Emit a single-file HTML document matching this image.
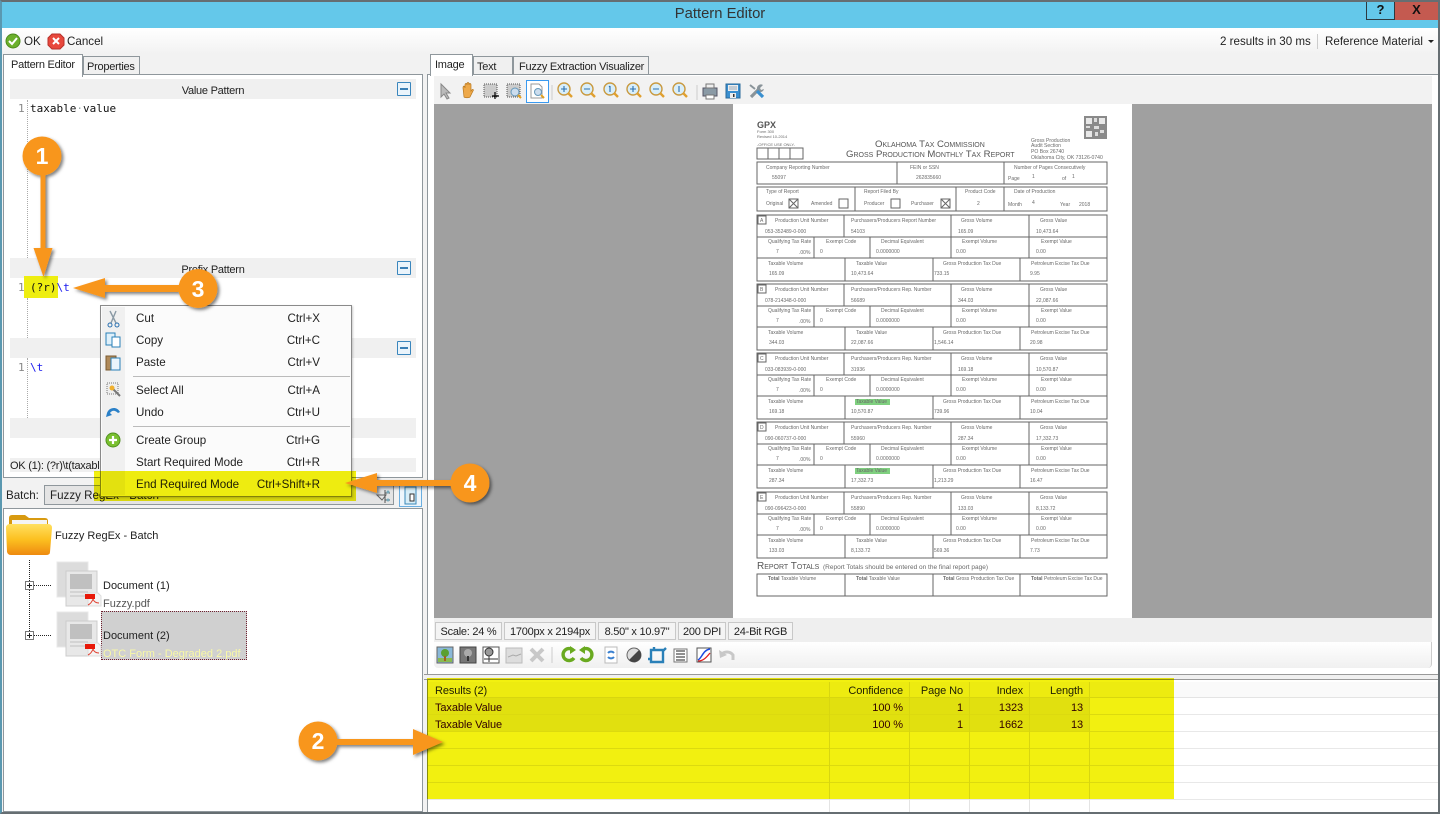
<!DOCTYPE html>
<html><head><meta charset="utf-8"><title>Pattern Editor</title>
<style>
html,body{margin:0;padding:0;background:#fff}
#p{position:relative;width:1440px;height:814px;overflow:hidden;background:#fff;font-family:"Liberation Sans",sans-serif;font-size:12px;color:#222}
#p div{position:absolute;box-sizing:border-box}
.t{white-space:nowrap;line-height:14px;font-size:11.6px;margin-top:1px}
.n{font-size:11px;letter-spacing:-.1px}
.m{font-size:11px;letter-spacing:-.25px}
.u{font-size:11px}
.r{text-align:right}
.c{font-family:"DejaVu Sans Mono","Liberation Mono",monospace;font-size:11px;line-height:14px;white-space:pre;margin-top:1px}
.h{background:#f0f0f0;left:10px;width:406px;height:20px}
.b{left:397px;width:14px;height:14px;border:1px solid #3a86bd;background:#eaf4fb;border-radius:1px}
.b:after{content:"";position:absolute;left:2px;top:5px;width:8px;height:2px;background:#3a7fb5}
.tab{background:#f0f0f0;border:1px solid #8f979c}
.s{top:622px;height:18px;border:1px solid #c8c8c8;background:#f4f4f4;font-size:11px;letter-spacing:-.25px;line-height:18px;text-align:center;white-space:nowrap}
svg{position:absolute;left:0;top:0}
.f text{font-family:"Liberation Sans",sans-serif;font-size:5px;fill:#6a6a6a}
.f path{fill:none;stroke:#666;stroke-width:1}
</style></head><body><div id="p">

<!-- window -->
<div style="left:2px;top:2px;width:1436px;height:26px;background:#64c8ea"></div>
<div class="t" style="left:520px;width:400px;top:5px;text-align:center;font-size:14.8px;line-height:16px;color:#333">Pattern Editor</div>
<div style="left:1366px;top:2px;width:29px;height:18px;border:1px solid #2d3a40;border-top:0;text-align:center;font-weight:bold;font-size:13px;line-height:15px;color:#111">?</div>
<div style="left:1395px;top:2px;width:43px;height:18px;background:#c45a50;text-align:center;font-weight:bold;font-size:13px;line-height:15px;color:#111">X</div>

<!-- top toolbar -->
<div style="left:2px;top:28px;width:1436px;height:26px;background:linear-gradient(#fff,#f2f2f2)"></div>
<div class="t" style="left:24px;top:34px">OK</div>
<div class="t" style="left:67px;top:34px">Cancel</div>
<div class="t" style="left:1220px;top:34px">2 results in 30 ms</div>
<div style="left:1317px;top:34px;width:1px;height:15px;background:#ccc"></div>
<div class="t" style="left:1325px;top:34px">Reference Material</div>
<div style="left:1428px;top:40px;width:0;height:0;border:3px solid transparent;border-top:3px solid #222;border-bottom:0"></div>

<div style="left:2px;top:54px;width:1436px;height:758px;background:#f2f2f2"></div>

<!-- left panel -->
<div style="left:3px;top:74px;width:420px;height:404px;background:#fff;border:1px solid #8f979c"></div>
<div class="tab" style="left:83px;top:56px;width:57px;height:19px"></div>
<div class="t m" style="left:87px;top:59px">Properties</div>
<div style="left:3px;top:54px;width:80px;height:23px;background:#fff;border:1px solid #8f979c;border-bottom:0"></div>
<div class="t m" style="left:11px;top:57px">Pattern Editor</div>

<div class="h" style="top:79px"></div>
<div class="t m" style="left:10px;width:406px;top:83px;text-align:center">Value Pattern</div>
<div class="b" style="top:82px"></div>
<div class="c" style="left:18px;top:101px;color:#888">1</div>
<div class="c" style="left:30px;top:101px;color:#111">taxable<span style="color:#9aa">·</span>value</div>
<div style="left:27px;top:100px;height:158px;border-left:1px dotted #aaa"></div>

<div class="h" style="top:258px"></div>
<div class="t m" style="left:10px;width:406px;top:262px;text-align:center">Prefix Pattern</div>
<div class="b" style="top:261px"></div>
<div style="left:24px;top:276px;width:34px;height:22px;background:#eeee10"></div>
<div class="c" style="left:18px;top:280px;color:#888">1</div>
<div class="c" style="left:30px;top:280px;color:#111">(?r)<span style="color:#1a1aee">\t</span></div>
<div style="left:27px;top:298px;height:40px;border-left:1px dotted #aaa"></div>

<div class="h" style="top:338px"></div>
<div class="b" style="top:341px"></div>
<div class="c" style="left:18px;top:360px;color:#888">1</div>
<div class="c" style="left:30px;top:360px;color:#1a1aee">\t</div>
<div style="left:27px;top:358px;height:60px;border-left:1px dotted #aaa"></div>
<div class="h" style="top:418px"></div>
<div class="h" style="top:458px;height:14px"></div>
<div class="t m" style="left:10px;top:458px">OK (1): (?r)\t(taxable</div>

<!-- batch row -->
<div class="t" style="left:6px;top:488px">Batch:</div>
<div style="left:44px;top:485px;width:350px;height:20px;background:#e4e4e4;border:1px solid #8f979c"></div>
<div class="t" style="left:50px;top:488px">Fuzzy RegEx - Batch</div>
<div style="left:399px;top:485px;width:23px;height:22px;background:#eef6fc;border:1px solid #6aaee0"></div>

<!-- tree -->
<div style="left:3px;top:508px;width:420px;height:304px;background:#fff;border:1px solid #8f979c"></div>
<div class="t u" style="left:55px;top:528px">Fuzzy RegEx - Batch</div>
<div style="left:101px;top:611px;width:146px;height:49px;background:#d0d0d0;border:1px dotted #702030"></div>
<div class="t u" style="left:103px;top:578px">Document (1)</div>
<div class="t u" style="left:103px;top:596px;color:#555">Fuzzy.pdf</div>
<div class="t u" style="left:103px;top:628px">Document (2)</div>
<div class="t u" style="left:103px;top:646px;color:#f8f8a8">OTC Form - Degraded 2.pdf</div>

<!-- right panel -->
<div style="left:427px;top:74px;width:1011px;height:601px;background:#fff;border-top:1px solid #8f979c;border-left:1px solid #8f979c"></div>
<div class="tab" style="left:473px;top:56px;width:40px;height:19px"></div>
<div class="t m" style="left:477px;top:59px">Text</div>
<div class="tab" style="left:513px;top:56px;width:136px;height:19px"></div>
<div class="t m" style="left:519px;top:59px">Fuzzy Extraction Visualizer</div>
<div style="left:430px;top:54px;width:43px;height:22px;background:#fff;border:1px solid #8f979c;border-bottom:0"></div>
<div class="t m" style="left:435px;top:57px">Image</div>
<div style="left:434px;top:76px;width:998px;height:28px;background:#f2f2f2"></div>
<div style="left:526px;top:80px;width:23px;height:23px;background:#fff;border:1px solid #3a9af0"></div>
<div style="left:434px;top:104px;width:299px;height:514px;background:#a0a0a0"></div>
<div style="left:1132px;top:104px;width:300px;height:514px;background:#a0a0a0"></div>
<div style="left:434px;top:618px;width:998px;height:25px;background:#efefef"></div>
<div style="left:434px;top:642px;width:998px;height:26px;background:linear-gradient(#fff,#f0f0f0);border-radius:0 0 4px 4px;border-right:1px solid #ccc"></div>
<div class="s" style="left:435px;width:67px">Scale: 24 %</div>
<div class="s" style="left:504px;width:92px">1700px x 2194px</div>
<div class="s" style="left:598px;width:78px">8.50" x 10.97"</div>
<div class="s" style="left:678px;width:48px">200 DPI</div>
<div class="s" style="left:728px;width:65px">24-Bit RGB</div>

<!-- form -->
<svg class="f" width="1440" height="814" style="filter:blur(.35px)">
<text x="757" y="128" style="font-size:9px;font-weight:bold;fill:#555">GPX</text>
<text x="757" y="133" style="font-size:4px">Form 300</text>
<text x="757" y="138" style="font-size:4px">Revised 10-2014</text>
<text x="757" y="146" style="font-size:4px">-OFFICE USE ONLY-</text>
<path d="M757 148h46v11h-46zM768 148v11M779 148v11M790 148v11"/>
<text x="875" y="147" style="font-size:9.6px;font-variant:small-caps;fill:#555">Oklahoma Tax Commission</text>
<text x="846" y="157" style="font-size:9.6px;font-variant:small-caps;fill:#555">Gross Production Monthly Tax Report</text>
<text x="1031" y="142" style="font-size:5.100px">Gross Production</text>
<text x="1031" y="147" style="font-size:5.100px">Audit Section</text>
<text x="1031" y="153" style="font-size:5.100px">PO Box 26740</text>
<text x="1031" y="159" style="font-size:5.100px">Oklahoma City, OK 73126-0740</text>
<rect x="1084" y="116" width="23" height="23" fill="#8a8a8a"/>
<rect x="1086" y="118" width="6" height="6" fill="#e8e8e8"/><rect x="1099" y="118" width="6" height="6" fill="#e8e8e8"/><rect x="1086" y="131" width="6" height="6" fill="#e8e8e8"/><rect x="1094" y="118" width="3" height="4" fill="#ddd"/><rect x="1094" y="126" width="5" height="3" fill="#ddd"/><rect x="1086" y="126" width="4" height="2" fill="#ddd"/><rect x="1095" y="132" width="3" height="4" fill="#ddd"/><rect x="1100" y="130" width="4" height="3" fill="#ddd"/>
<path d="M757 162h350v22h-350zM897 162v22M1004 162v22M757 187h350v24h-350zM855 187v24M956 187v24M1004 187v24"/>
<text x="766" y="169">Company Reporting Number</text><text x="772" y="179">55097</text>
<text x="910" y="169">FEIN or SSN</text><text x="916" y="179">262835660</text>
<text x="1014" y="169">Number of Pages Consecutively</text><text x="1008" y="180">Page</text><text x="1032" y="178">1</text><text x="1062" y="180">of</text><text x="1072" y="178">1</text>
<text x="766" y="193">Type of Report</text><text x="766" y="205">Original</text><rect x="789" y="199" width="9" height="9" style="fill:none;stroke:#666"/><text x="811" y="205">Amended</text><rect x="839" y="199" width="9" height="9" style="fill:none;stroke:#666"/>
<text x="864" y="193">Report Filed By</text><text x="864" y="205">Producer</text><rect x="891" y="199" width="9" height="9" style="fill:none;stroke:#666"/><text x="911" y="205">Purchaser</text><rect x="941" y="199" width="9" height="9" style="fill:none;stroke:#666"/>
<path d="M789 199l9 9M798 199l-9 9M941 199l9 9M950 199l-9 9"/>
<text x="965" y="193">Product Code</text><text x="977" y="205">2</text>
<text x="1014" y="193">Date of Production</text><text x="1008" y="206">Month</text><text x="1032" y="204">4</text><text x="1060" y="206">Year</text><text x="1079" y="206">2018</text>

<rect x="855" y="399" width="35" height="6" fill="#7fd07f"/><rect x="855" y="468" width="35" height="6" fill="#7fd07f"/>

<g>
<path d="M757 215h350v66h-350zM757 237h350M757 258h350M844 215v22M951 215v22M1029 215v22M814 237v21M870 237v21M951 237v21M1029 237v21M845 258v23M933 258v23M1020 258v23M758 216h8v8h-8z"/>
<text x="760" y="222">A</text><text x="775" y="222">Production Unit Number</text><text x="851" y="222">Purchasers/Producers Report Number</text><text x="961" y="222">Gross Volume</text><text x="1040" y="222">Gross Value</text>
<text x="765" y="233">053-352489-0-000</text><text x="851" y="233">54103</text><text x="958" y="233">165.09</text><text x="1036" y="233">10,473.64</text>
<text x="768" y="243">Qualifying Tax Rate</text><text x="826" y="243">Exempt Code</text><text x="881" y="243">Decimal Equivalent</text><text x="962" y="243">Exempt Volume</text><text x="1041" y="243">Exempt Value</text>
<text x="776" y="253">7</text><text x="799" y="254">.00%</text><text x="820" y="253">0</text><text x="876" y="253">0.0000000</text><text x="956" y="253">0.00</text><text x="1036" y="253">0.00</text>
<text x="768" y="265">Taxable Volume</text><text x="856" y="265">Taxable Value</text><text x="943" y="265">Gross Production Tax Due</text><text x="1031" y="265">Petroleum Excise Tax Due</text>
<text x="769" y="275">165.09</text><text x="851" y="275">10,473.64</text><text x="934" y="275">733.15</text><text x="1030" y="275">9.95</text>
</g>
<g>
<path d="M757 284h350v66h-350zM757 306h350M757 327h350M844 284v22M951 284v22M1029 284v22M814 306v21M870 306v21M951 306v21M1029 306v21M845 327v23M933 327v23M1020 327v23M758 285h8v8h-8z"/>
<text x="760" y="291">B</text><text x="775" y="291">Production Unit Number</text><text x="851" y="291">Purchasers/Producers Rep. Number</text><text x="961" y="291">Gross Volume</text><text x="1040" y="291">Gross Value</text>
<text x="765" y="302">078-214348-0-000</text><text x="851" y="302">56689</text><text x="958" y="302">344.03</text><text x="1036" y="302">22,087.66</text>
<text x="768" y="312">Qualifying Tax Rate</text><text x="826" y="312">Exempt Code</text><text x="881" y="312">Decimal Equivalent</text><text x="962" y="312">Exempt Volume</text><text x="1041" y="312">Exempt Value</text>
<text x="776" y="322">7</text><text x="799" y="323">.00%</text><text x="820" y="322">0</text><text x="876" y="322">0.0000000</text><text x="956" y="322">0.00</text><text x="1036" y="322">0.00</text>
<text x="768" y="334">Taxable Volume</text><text x="856" y="334">Taxable Value</text><text x="943" y="334">Gross Production Tax Due</text><text x="1031" y="334">Petroleum Excise Tax Due</text>
<text x="769" y="344">344.03</text><text x="851" y="344">22,087.66</text><text x="934" y="344">1,546.14</text><text x="1030" y="344">20.98</text>
</g>
<g>
<path d="M757 353h350v66h-350zM757 375h350M757 396h350M844 353v22M951 353v22M1029 353v22M814 375v21M870 375v21M951 375v21M1029 375v21M845 396v23M933 396v23M1020 396v23M758 354h8v8h-8z"/>
<text x="760" y="360">C</text><text x="775" y="360">Production Unit Number</text><text x="851" y="360">Purchasers/Producers Rep. Number</text><text x="961" y="360">Gross Volume</text><text x="1040" y="360">Gross Value</text>
<text x="765" y="371">033-083939-0-000</text><text x="851" y="371">31936</text><text x="958" y="371">169.18</text><text x="1036" y="371">10,570.87</text>
<text x="768" y="381">Qualifying Tax Rate</text><text x="826" y="381">Exempt Code</text><text x="881" y="381">Decimal Equivalent</text><text x="962" y="381">Exempt Volume</text><text x="1041" y="381">Exempt Value</text>
<text x="776" y="391">7</text><text x="799" y="392">.00%</text><text x="820" y="391">0</text><text x="876" y="391">0.0000000</text><text x="956" y="391">0.00</text><text x="1036" y="391">0.00</text>
<text x="768" y="403">Taxable Volume</text><text x="856" y="403">Taxable Value</text><text x="943" y="403">Gross Production Tax Due</text><text x="1031" y="403">Petroleum Excise Tax Due</text>
<text x="769" y="413">169.18</text><text x="851" y="413">10,570.87</text><text x="934" y="413">739.96</text><text x="1030" y="413">10.04</text>
</g>
<g>
<path d="M757 422h350v66h-350zM757 444h350M757 465h350M844 422v22M951 422v22M1029 422v22M814 444v21M870 444v21M951 444v21M1029 444v21M845 465v23M933 465v23M1020 465v23M758 423h8v8h-8z"/>
<text x="760" y="429">D</text><text x="775" y="429">Production Unit Number</text><text x="851" y="429">Purchasers/Producers Rep. Number</text><text x="961" y="429">Gross Volume</text><text x="1040" y="429">Gross Value</text>
<text x="765" y="440">090-060737-0-000</text><text x="851" y="440">55960</text><text x="958" y="440">287.34</text><text x="1036" y="440">17,332.73</text>
<text x="768" y="450">Qualifying Tax Rate</text><text x="826" y="450">Exempt Code</text><text x="881" y="450">Decimal Equivalent</text><text x="962" y="450">Exempt Volume</text><text x="1041" y="450">Exempt Value</text>
<text x="776" y="460">7</text><text x="799" y="461">.00%</text><text x="820" y="460">0</text><text x="876" y="460">0.0000000</text><text x="956" y="460">0.00</text><text x="1036" y="460">0.00</text>
<text x="768" y="472">Taxable Volume</text><text x="856" y="472">Taxable Value</text><text x="943" y="472">Gross Production Tax Due</text><text x="1031" y="472">Petroleum Excise Tax Due</text>
<text x="769" y="482">287.34</text><text x="851" y="482">17,332.73</text><text x="934" y="482">1,213.29</text><text x="1030" y="482">16.47</text>
</g>
<g>
<path d="M757 492h350v66h-350zM757 514h350M757 535h350M844 492v22M951 492v22M1029 492v22M814 514v21M870 514v21M951 514v21M1029 514v21M845 535v23M933 535v23M1020 535v23M758 493h8v8h-8z"/>
<text x="760" y="499">E</text><text x="775" y="499">Production Unit Number</text><text x="851" y="499">Purchasers/Producers Rep. Number</text><text x="961" y="499">Gross Volume</text><text x="1040" y="499">Gross Value</text>
<text x="765" y="510">090-096423-0-000</text><text x="851" y="510">55890</text><text x="958" y="510">133.03</text><text x="1036" y="510">8,133.72</text>
<text x="768" y="520">Qualifying Tax Rate</text><text x="826" y="520">Exempt Code</text><text x="881" y="520">Decimal Equivalent</text><text x="962" y="520">Exempt Volume</text><text x="1041" y="520">Exempt Value</text>
<text x="776" y="530">7</text><text x="799" y="531">.00%</text><text x="820" y="530">0</text><text x="876" y="530">0.0000000</text><text x="956" y="530">0.00</text><text x="1036" y="530">0.00</text>
<text x="768" y="542">Taxable Volume</text><text x="856" y="542">Taxable Value</text><text x="943" y="542">Gross Production Tax Due</text><text x="1031" y="542">Petroleum Excise Tax Due</text>
<text x="769" y="552">133.03</text><text x="851" y="552">8,133.72</text><text x="934" y="552">569.36</text><text x="1030" y="552">7.73</text>
</g>
<text x="757" y="569" style="font-size:10px;font-variant:small-caps;fill:#555">Report Totals</text><text x="823" y="569" style="font-size:6.500px">(Report Totals should be entered on the final report page)</text>
<path d="M757 574h350v22h-350zM845 574v22M933 574v22M1020 574v22"/>
<text x="768" y="580"><tspan font-weight="bold">Total</tspan> Taxable Volume</text><text x="856" y="580"><tspan font-weight="bold">Total</tspan> Taxable Value</text><text x="943" y="580"><tspan font-weight="bold">Total</tspan> Gross Production Tax Due</text><text x="1031" y="580"><tspan font-weight="bold">Total</tspan> Petroleum Excise Tax Due</text>
</svg>

<!-- results grid -->
<div style="left:424px;top:674px;width:1014px;height:6px;background:#f0f0f0;border-top:1px solid #999;border-bottom:1px solid #999"></div>
<div style="left:427px;top:680px;width:1011px;height:132px;background:#fff;border-left:1px solid #8f979c"></div>
<div style="left:428px;top:682px;width:1010px;height:16px;background:#fafafa;border-bottom:1px solid #e4e4e4"></div>
<div style="left:428px;top:698px;width:662px;height:34px;background:#eee"></div>
<div style="left:428px;top:714px;width:1010px;height:1px;background:#e8e8e8"></div>
<div style="left:428px;top:731px;width:1010px;height:1px;background:#e8e8e8"></div>
<div style="left:428px;top:748px;width:1010px;height:1px;background:#e8e8e8"></div>
<div style="left:428px;top:765px;width:1010px;height:1px;background:#e8e8e8"></div>
<div style="left:428px;top:782px;width:1010px;height:1px;background:#e8e8e8"></div>
<div style="left:428px;top:799px;width:1010px;height:1px;background:#e8e8e8"></div>
<div style="left:829px;top:682px;width:1px;height:130px;background:#e4e4e4"></div>
<div style="left:909px;top:682px;width:1px;height:130px;background:#e4e4e4"></div>
<div style="left:969px;top:682px;width:1px;height:130px;background:#e4e4e4"></div>
<div style="left:1029px;top:682px;width:1px;height:130px;background:#e4e4e4"></div>
<div style="left:1089px;top:682px;width:1px;height:130px;background:#e4e4e4"></div>
<div class="t n" style="left:435px;top:683px">Results (2)</div>
<div class="t r n" style="left:829px;width:74px;top:683px">Confidence</div>
<div class="t r n" style="left:909px;width:54px;top:683px">Page No</div>
<div class="t r n" style="left:969px;width:54px;top:683px">Index</div>
<div class="t r n" style="left:1029px;width:54px;top:683px">Length</div>
<div class="t n" style="left:435px;top:700px;color:#300">Taxable Value</div>
<div class="t r n" style="left:829px;width:74px;top:700px;color:#300">100 %</div>
<div class="t r n" style="left:909px;width:54px;top:700px;color:#300">1</div>
<div class="t r n" style="left:969px;width:54px;top:700px;color:#300">1323</div>
<div class="t r n" style="left:1029px;width:54px;top:700px;color:#300">13</div>
<div class="t n" style="left:435px;top:717px;color:#300">Taxable Value</div>
<div class="t r n" style="left:829px;width:74px;top:717px;color:#300">100 %</div>
<div class="t r n" style="left:909px;width:54px;top:717px;color:#300">1</div>
<div class="t r n" style="left:969px;width:54px;top:717px;color:#300">1662</div>
<div class="t r n" style="left:1029px;width:54px;top:717px;color:#300">13</div>
<div style="left:427px;top:678px;width:747px;height:121px;background:#f2f010;mix-blend-mode:multiply"></div>

<!-- icons -->
<svg width="1440" height="814">
<defs><linearGradient id="fg" x1="0" y1="0" x2="0" y2="1"><stop offset="0" stop-color="#ffe060"/><stop offset=".5" stop-color="#fcc020"/><stop offset="1" stop-color="#ee8a10"/></linearGradient></defs>
<!-- ok cancel -->
<circle cx="13" cy="41" r="7" fill="#6cb02c" stroke="#4d8a1c"/><path d="M9 41l3 3 5-6" stroke="#fff" stroke-width="2" fill="none"/>
<path d="M52 34h8l4 4v7l-4 4h-8l-4-4v-7z" fill="#e8483c" stroke="#b8302a"/><path d="M53 38l6 6M59 38l-6 6" stroke="#fff" stroke-width="2"/>
<!-- image toolbar -->
<path d="M441 84v13l3-3 3 5 2-1-3-5h4z" fill="#bbb" stroke="#888"/>
<path d="M463 88c0-3 2-2 2 0v-3c0-2 2-2 2 0v-1c0-2 2-2 2 0v1c0-2 2-2 2 0v6c2-3 3-1 2 0l-3 6c-1 1-5 1-6 0z" fill="#eea94a" stroke="#b87820" stroke-width=".7"/>
<rect x="484" y="84" width="13" height="13" fill="#ccc" stroke="#555" stroke-dasharray="1 1"/><path d="M495 92v7M492 96h7" stroke="#000" stroke-width="1.2"/>
<rect x="507" y="84" width="13" height="13" fill="#ccc" stroke="#555" stroke-dasharray="1 1"/><circle cx="515" cy="92" r="4" fill="#cde" stroke="#6699bb"/><path d="M518 95l3 3" stroke="#e0a020" stroke-width="2"/>
<path d="M531 84h8l3 3v11h-11z" fill="#fff" stroke="#999"/><circle cx="538" cy="92" r="3.5" fill="#cde" stroke="#6699bb"/><path d="M541 95l3 3" stroke="#e0a020" stroke-width="2"/>
<path d="M552 85v15" stroke="#ccc"/>
<g fill="#d8eefa" stroke="#c99a40" stroke-width="1.4">
<circle cx="564" cy="89" r="6"/><circle cx="587" cy="89" r="6"/><circle cx="610" cy="89" r="6"/><circle cx="633" cy="89" r="6"/><circle cx="656" cy="89" r="6"/><circle cx="679" cy="89" r="6"/>
</g>
<g stroke="#e0a030" stroke-width="2.4"><path d="M568 93l4 4M591 93l4 4M614 93l4 4M637 93l4 4M660 93l4 4M683 93l4 4"/></g>
<g stroke="#2a70b0" stroke-width="1.1" fill="none"><path d="M561 89h6M564 86v6M584 89h6M610 86v6M609 87l1-1M630 89h6M633 86v6M653 89h6M679 86v6"/></g>
<path d="M697 85v15" stroke="#ccc"/>
<rect x="703" y="88" width="14" height="8" fill="#8a9aa5" stroke="#556"/><rect x="706" y="84" width="8" height="4" fill="#eee" stroke="#777"/><rect x="706" y="95" width="8" height="4" fill="#fff" stroke="#777"/>
<path d="M726 84h14v14h-14z" fill="#3a8fd0" stroke="#2a6a9a"/><rect x="728" y="85" width="10" height="6" fill="#eee"/><path d="M729 87h8M729 89h8" stroke="#9ab"/><rect x="730" y="93" width="6" height="5" fill="#eee"/><rect x="733" y="94" width="1.500" height="3" fill="#333"/>
<path d="M751 97l8-8" stroke="#8a949a" stroke-width="3.200"/><path d="M757 89a4 4 0 0 1 6-4l-3 3 1 2 3-1a4 4 0 0 1-5 3z" fill="#8a949a"/>
<path d="M763 97l-6-6" stroke="#3a90d0" stroke-width="3.200"/><path d="M755 89l-5-4" stroke="#8a949a" stroke-width="2"/>
<!-- bottom toolbar -->
<rect x="437" y="647" width="16" height="16" fill="#8ab8d8" stroke="#666"/><circle cx="445" cy="653" r="4" fill="#5aa030"/><rect x="438" y="658" width="14" height="4" fill="#8aba50"/><rect x="444" y="656" width="2" height="5" fill="#a06020"/>
<rect x="460" y="647" width="16" height="16" fill="#777" stroke="#444"/><circle cx="468" cy="653" r="4" fill="#aaa"/><rect x="467" y="656" width="2" height="5" fill="#333"/>
<rect x="483" y="647" width="16" height="16" fill="#fff" stroke="#555"/><circle cx="489" cy="652" r="4" fill="#999" stroke="#333"/><path d="M489 656v6M484 659h14" stroke="#333"/>
<rect x="506" y="648" width="16" height="15" fill="#ddd" stroke="#bbb"/><path d="M508 657l5-2 3 1 5-2" stroke="#aaa" fill="none"/>
<path d="M531 649l12 12M543 649l-12 12" stroke="#c8c8c8" stroke-width="4"/>
<path d="M552 647v16" stroke="#ccc"/>
<path d="M573 650a6 6 0 1 0 1 8" fill="none" stroke="#6aaa20" stroke-width="3.4"/><path d="M570 646l6 4-6 4z" fill="#6aaa20"/>
<path d="M582 650a6 6 0 1 1-1 8" fill="none" stroke="#6aaa20" stroke-width="3.4"/><path d="M585 646l-6 4 6 4z" fill="#6aaa20"/>
<rect x="605" y="647" width="12" height="16" fill="#fff" stroke="#bbb"/><path d="M608 653a4 4 0 0 1 6 0M614 657a4 4 0 0 1-6 0" stroke="#3a80d0" stroke-width="2" fill="none"/>
<circle cx="634" cy="655" r="7" fill="#ddd" stroke="#666"/><path d="M639 650a7 7 0 0 1-10 10z" fill="#444"/>
<path d="M651 650h12v12h-12zM654 647v3M651 659h-3M663 651l3-3" fill="none" stroke="#2a80b8" stroke-width="2.4"/>
<rect x="674" y="649" width="13" height="13" fill="#fff" stroke="#777"/><path d="M676 651h9M676 654h9M676 657h9M676 660h9" stroke="#222"/>
<rect x="697" y="648" width="14" height="14" fill="#fff" stroke="#555"/><path d="M698 660c4-2 5-10 12-11" stroke="#1a4ae0" stroke-width="1.5" fill="none"/><path d="M698 661c5 0 8-3 12-8" stroke="#e02020" stroke-width="1.3" fill="none"/>
<path d="M721 655c3-4 9-4 12 0v5" fill="none" stroke="#c8c8c8" stroke-width="3"/><path d="M719 650l1 8 7-3z" fill="#c8c8c8"/>
<!-- batch -->
<path d="M377 495h9l-4 5z" fill="none" stroke="#666"/><path d="M385 490v13M385 493h5M385 500h5" stroke="#555"/><circle cx="388" cy="492" r="1.5" fill="#7ab"/><circle cx="388" cy="500" r="1.5" fill="#7ab"/>
<rect x="405" y="487" width="11" height="17" fill="#d8eef8" stroke="#3a88b8"/><rect x="410" y="494" width="4" height="7" fill="#fff" stroke="#333"/>
<!-- folder -->
<path d="M9 518q0-3 3-3h13l4 3h16q3 0 3 3v6H9z" fill="#d89a10"/>
<rect x="12" y="520" width="35" height="5" fill="#f4f4f4"/>
<path d="M6 528q0-4 4-4l38 0q4 0 4 4l-2 24q0 3-4 3H11q-3 0-4-3z" fill="url(#fg)"/>
<!-- tree lines -->
<path d="M29.5 560v75M34 585.500h18M34 635.500h18" stroke="#222" stroke-dasharray="1 1" fill="none"/>
<rect x="25.5" y="581.500" width="8" height="8" fill="#fff" stroke="#777"/><path d="M27 585.500h5M29.5 583v5" stroke="#222"/>
<rect x="25.500" y="631.500" width="8" height="8" fill="#fff" stroke="#777"/><path d="M27 635.500h5M29.5 633v5" stroke="#222"/>
<!-- doc icons -->
<rect x="57" y="562" width="31" height="35" fill="#dcdcdc" stroke="#e8e8e8"/><rect x="66" y="571" width="31" height="35" fill="#e8e8e8" stroke="#ccc"/><path d="M70 574h22v15h-22z" fill="#c0c0c0"/><path d="M70 592h18M70 596h15" stroke="#c0c0c0"/>
<path d="M88 593h10l3 3v10H88z" fill="#f4f4f4" stroke="#ddd"/><rect x="85" y="594" width="10" height="5" fill="#e81808"/><path d="M93 599c-1 3-3 5-5 6M93 599c1 3 3 4 6 4" stroke="#e04030" fill="none"/>
<rect x="57" y="612" width="31" height="35" fill="#dcdcdc" stroke="#e8e8e8"/><rect x="66" y="621" width="31" height="35" fill="#e8e8e8" stroke="#ccc"/><path d="M70 624h22v15h-22z" fill="#c0c0c0"/><path d="M70 642h18M70 646h15" stroke="#c0c0c0"/>
<path d="M88 643h10l3 3v10H88z" fill="#f4f4f4" stroke="#ddd"/><rect x="85" y="644" width="10" height="5" fill="#e81808"/><path d="M93 649c-1 3-3 5-5 6M93 649c1 3 3 4 6 4" stroke="#e04030" fill="none"/>
</svg>

<!-- context menu -->
<div style="left:100px;top:305px;width:252px;height:192px;background:#fbfbfb;border:1px solid #8a8a8a;box-shadow:1px 1px 2px rgba(0,0,0,.2)"></div>
<div style="left:102px;top:307px;width:23px;height:188px;background:#f0f0f0"></div>
<div style="left:133px;top:376px;width:217px;height:1px;background:#bbb"></div>
<div style="left:133px;top:426px;width:217px;height:1px;background:#bbb"></div>
<div class="t" style="left:136px;top:311px">Cut</div><div class="t r" style="left:240px;width:80px;top:311px">Ctrl+X</div>
<div class="t" style="left:136px;top:333px">Copy</div><div class="t r" style="left:240px;width:80px;top:333px">Ctrl+C</div>
<div class="t" style="left:136px;top:355px">Paste</div><div class="t r" style="left:240px;width:80px;top:355px">Ctrl+V</div>
<div class="t" style="left:136px;top:383px">Select All</div><div class="t r" style="left:240px;width:80px;top:383px">Ctrl+A</div>
<div class="t" style="left:136px;top:405px">Undo</div><div class="t r" style="left:240px;width:80px;top:405px">Ctrl+U</div>
<div class="t" style="left:136px;top:433px">Create Group</div><div class="t r" style="left:240px;width:80px;top:433px">Ctrl+G</div>
<div class="t" style="left:136px;top:455px">Start Required Mode</div><div class="t r" style="left:240px;width:80px;top:455px">Ctrl+R</div>
<div class="t" style="left:136px;top:477px">End Required Mode</div><div class="t r" style="left:230px;width:90px;top:477px">Ctrl+Shift+R</div>
<svg width="1440" height="814">
<path d="M110 311l6 12M116 311l-5 12" stroke="#8a9aa5" stroke-width="1.4"/><circle cx="110" cy="325" r="2" fill="none" stroke="#2a70b0"/><circle cx="117" cy="325" r="2" fill="none" stroke="#2a70b0"/>
<path d="M106 333h9v12h-9z" fill="#dff0fa" stroke="#2a80b8"/><path d="M112 337h8v10h-8z" fill="#fff" stroke="#2a80b8"/>
<rect x="106" y="356" width="10" height="14" fill="#b08a5a" stroke="#7a5a30"/><path d="M111 358h9v12h-9z" fill="#eaf5fb" stroke="#2a80b8"/>
<rect x="107" y="383" width="11" height="11" fill="#eee" stroke="#777" stroke-dasharray="1 1"/><path d="M113 389l7 7" stroke="#777" stroke-width="2"/><circle cx="112" cy="388" r="2.500" fill="#f0b030"/>
<path d="M107 413c2-6 10-7 13-1l-2 1c-3-3-6-3-8 0l2 2-6 2z" fill="#2a80c8"/>
<circle cx="113" cy="440" r="7" fill="#7ac030" stroke="#509020"/><path d="M109 440h8M113 436v8" stroke="#fff" stroke-width="2.200"/>
</svg>
<div style="left:94px;top:471px;width:262px;height:30px;background:#f2f010;mix-blend-mode:multiply"></div>

<!-- window border -->
<div style="left:0;top:0;width:1440px;height:814px;border:2px solid #666e72;border-left-color:#5a98b0"></div>

<!-- callouts -->
<svg width="1440" height="814">
<defs>
<filter id="sh" x="-30%" y="-30%" width="170%" height="170%"><feDropShadow dx="2" dy="2" stdDeviation="1.600" flood-color="#000" flood-opacity=".5"/></filter>
</defs>
<g fill="#f8961e" filter="url(#sh)">
<path d="M40.500 170h5v78h7l-9 29-10-29h7z"/>
<circle cx="42" cy="156" r="19.500"/>
</g>
<g fill="#f8961e" filter="url(#sh)">
<path d="M180 285v7h-75v6l-32-10 32-10v7z"/>
<circle cx="198" cy="288.500" r="19.500"/>
</g>
<g fill="#f8961e" filter="url(#sh)">
<path d="M452 480v6h-75v7l-32-10 32-10v7z"/>
<circle cx="470" cy="483" r="19.500"/>
</g>
<g fill="#f8961e" filter="url(#sh)">
<path d="M335 739v6h78v10l30-13-30-13v10z"/>
<circle cx="318" cy="741" r="19.500"/>
</g>
<g fill="#fff" font-family="Liberation Sans,sans-serif" font-weight="bold" font-size="23" text-anchor="middle">
<text x="42" y="164">1</text><text x="198" y="297">3</text><text x="470" y="491">4</text><text x="318" y="749">2</text>
</g>
</svg>
</div></body></html>
